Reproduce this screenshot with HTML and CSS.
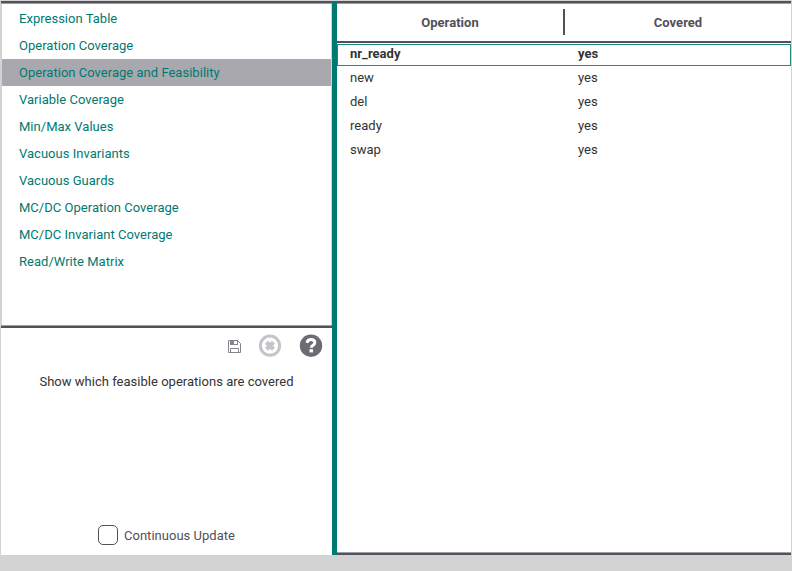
FILE: index.html
```html
<!DOCTYPE html>
<html lang="en">
<head>
<meta charset="utf-8">
<title>Coverage</title>
<link rel="stylesheet" href="styles.css">
</head>
<body>
<div class="window">
  <aside class="side">
    <ul class="list">
      <li>Expression Table</li>
      <li>Operation Coverage</li>
      <li class="selected">Operation Coverage and Feasibility</li>
      <li>Variable Coverage</li>
      <li>Min/Max Values</li>
      <li>Vacuous Invariants</li>
      <li>Vacuous Guards</li>
      <li>MC/DC Operation Coverage</li>
      <li>MC/DC Invariant Coverage</li>
      <li>Read/Write Matrix</li>
    </ul>
    <div class="detail">
      <div class="tools">
        <svg class="save" width="14" height="14" viewBox="0 0 14 14"><path d="M1.500 1.500h9l3 3v9h-12zM3.500 13.500v-4h8v4" fill="none" stroke="#85858c"/><path d="M3 1h8v5H3zM7 2v3h2V2z" fill="#85858c" fill-rule="evenodd"/><path d="M9 2h1v3H9z" fill="#fff"/></svg>
        <svg class="cancel" width="24" height="24" viewBox="0 0 24 24"><circle cx="12" cy="11.700" r="9.600" fill="none" stroke="#c4c4c9" stroke-width="3"/><path d="M8.500 8.200l7 7M15.500 8.200l-7 7" stroke="#c4c4c9" stroke-width="4.200"/></svg>
        <svg class="help" width="24" height="24" viewBox="0 0 24 24"><circle cx="12" cy="11.700" r="11.200" fill="#6b6b73"/><path d="M7.900 8.800C8.600 6.300 10 5.600 12 5.600c2.300 0 3.800 1.300 3.800 3.100 0 2.600-3.500 2.500-3.500 5" fill="none" stroke="#fff" stroke-width="3"/><path d="M10.500 15.200h3.600v3.200h-3.600z" fill="#fff"/></svg>
      </div>
      <p class="description">Show which feasible operations are covered</p>
      <label class="update"><span class="box"></span><span class="caption">Continuous Update</span></label>
    </div>
  </aside>
  <div class="divider"></div>
  <main class="results">
    <div class="header"><div>Operation</div><div>Covered</div></div>
    <div class="rows">
      <div class="row current"><span>nr_ready</span><span>yes</span></div>
      <div class="row"><span>new</span><span>yes</span></div>
      <div class="row"><span>del</span><span>yes</span></div>
      <div class="row"><span>ready</span><span>yes</span></div>
      <div class="row"><span>swap</span><span>yes</span></div>
    </div>
  </main>
</div>
</body>
</html>
```
FILE: styles.css
```css
* { box-sizing: border-box; }
body { margin: 0; height: 571px; background: #d3d3d3; font: 13px/24px Roboto, sans-serif; letter-spacing: .02px; color: #333; overflow: hidden; }
.window { display: flex; height: 555px; margin: 0 1px; padding-top: 1px; background: linear-gradient(#d3d3d3 1px, #fff 1px); }
.side { flex: none; width: 331px; display: flex; flex-direction: column; }
.list { list-style: none; margin: 0; padding: 4px 1px 0; height: 327px; background: linear-gradient(#535059 2px, #a09fa5 2px, #a09fa5 3px, transparent 3px, transparent 324px, #a09fa5 324px, #a09fa5 325px, #535059 325px), linear-gradient(90deg, #d3d3d3 1px, #fff 1px, #fff 330px, #d3d3d3 330px); color: #007a71; line-height: 27px; }
.list li { padding-left: 17px; height: 27px; }
.list .selected { background: #a9a8ae; }
.detail { flex: 1; display: flex; flex-direction: column; }
.tools { display: flex; align-items: center; height: 36px; padding-left: 226px; }
.cancel, .help { margin-left: 17px; }
.description { margin: 6px 0 0; text-align: center; }
.update { display: flex; align-items: center; gap: 6px; margin: auto 0 8px 97px; height: 24px; color: #535059; }
.caption { padding-top: 2px; }
.box { width: 20px; height: 20px; border: 1px solid #535059; border-radius: 5px; }
.divider { flex: none; width: 5px; background: #007a71; }
.results { flex: 1; min-width: 0; padding-top: 3px; background: linear-gradient(#535059 2px, #a09fa5 2px, #a09fa5 3px, transparent 3px, transparent 551px, #a09fa5 551px, #a09fa5 552px, #535059 552px); }
.header { display: flex; align-items: flex-start; height: 39px; padding-top: 5px; border-bottom: 2px solid #535059; font-weight: 700; color: #535059; text-align: center; }
.header div { flex: 1; height: 26px; line-height: 27px; }
.header div:first-child { flex: none; width: 228px; border-right: 2px solid #535059; }
.rows { padding-top: 1px; }
.row { display: flex; height: 24px; padding-left: 13px; }
.row span { flex: none; width: 228px; }
.row span:last-child { flex: 1; }
.row.current { height: 22px; line-height: 18px; border: 1px solid #1a8c84; padding-left: 12px; font-weight: 700; }
```
